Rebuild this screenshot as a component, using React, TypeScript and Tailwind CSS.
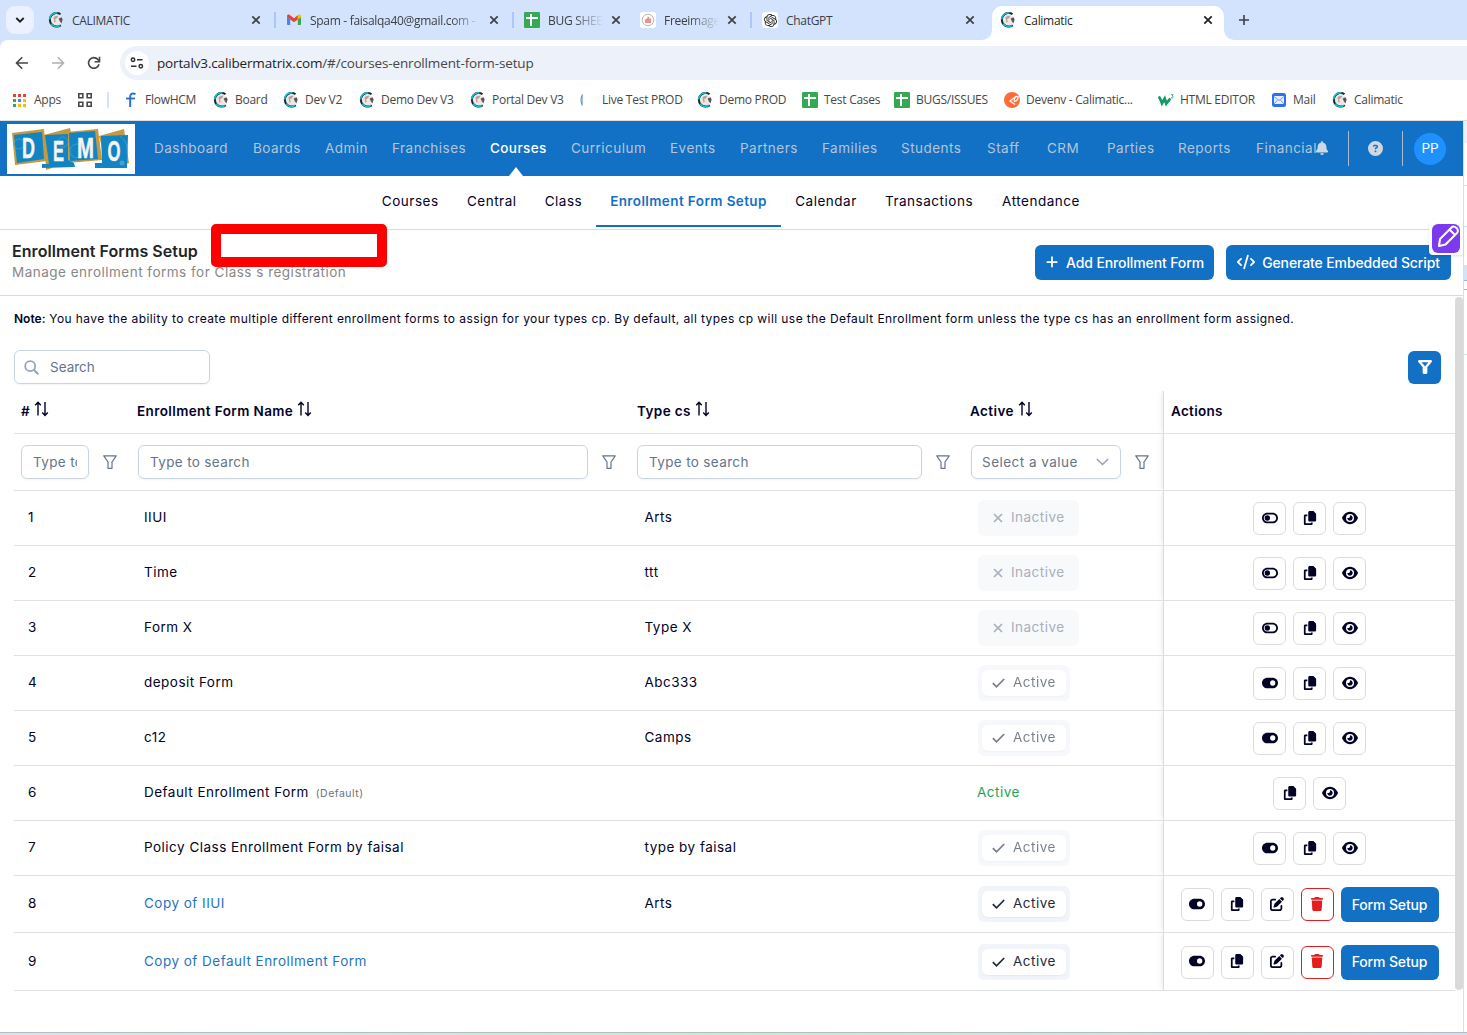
import type { ReactNode } from "react";
import clsx from "clsx";
import {
  FaBell,
  FaCircleQuestion,
  FaCode,
  FaCopy,
  FaEye,
  FaPenToSquare,
  FaPlus,
  FaToggleOff,
  FaToggleOn,
  FaTrash,
} from "react-icons/fa6";
import { SiOpenai } from "react-icons/si";

function GlobeIcon() {
  return (
    <svg width="16" height="16" viewBox="0 0 16 16" fill="none" className="shrink-0">
      <circle cx="8.2" cy="8" r="5.6" fill="#eee6e4" />
      <path d="M5.500 5.500C6.500 4 8.500 3.300 10.300 3.800L9.200 6 7 7.400l.8 2.200L6.500 11z" fill="#b3a29e" />
      <path d="M10.600 6.600l3-1.400 1 2.200-1.200 4-1.700-2.300z" fill="#5b5558" />
      <path d="M12.500 2.200A6.800 6.800 0 1 0 12.800 13.200" stroke="#17252c" strokeWidth="2" />
      <path d="M9.500 1A6.600 6.600 0 0 0 1.600 7.500M3 11.800A6.300 6.300 0 0 0 12 13.400" stroke="#14bccb" strokeWidth="1.700" />
    </svg>
  );
}

function GmailIcon() {
  return (
    <svg width="16" height="16" viewBox="0 0 16 16" className="shrink-0">
      <path d="M1 5v7.2c0 .5.4.8.8.8h2.4V7.2z" fill="#4285f4" />
      <path d="M15 5v7.2c0 .5-.4.8-.8.8h-2.4V7.2z" fill="#34a853" />
      <path d="M11.8 3.6v3.8L15 5V4c0-1.3-1.5-2-2.5-1.2z" fill="#fbbc04" />
      <path d="M1 5V4c0-1.3 1.500-2 2.500-1.200L8 6.200l3.800-2.900v4.100L8 10.200 4.200 7.400z" fill="#ea4335" />
    </svg>
  );
}

function SheetIcon() {
  return (
    <svg width="16" height="16" viewBox="0 0 16 16" className="shrink-0">
      <rect width="16" height="16" rx="1.2" fill="#34a853" />
      <path d="M2 6h12M7 2v12" stroke="#fff" strokeWidth="2" />
    </svg>
  );
}

function FreeimageIcon() {
  return (
    <svg width="16" height="16" viewBox="0 0 16 16" className="shrink-0">
      <rect width="16" height="16" rx="2.500" fill="#fff" />
      <circle cx="8" cy="8" r="5.800" fill="#fff" stroke="#b9b9bd" />
      <path d="M5 11V7.500L7.500 6V4.800h1.600V6.500H11V11z" fill="#ef8f86" />
    </svg>
  );
}

function ChatGptIcon() {
  return (
    <span className="flex size-4 shrink-0 items-center justify-center rounded-[3px] bg-white text-[#202123]">
      <SiOpenai size={13} />
    </span>
  );
}

function FlowIcon() {
  return (
    <svg width="16" height="16" viewBox="0 0 16 16" fill="none" className="shrink-0">
      <path d="M12.500 2.200C9 .6 7.200 2 7.200 4.500V15" stroke="#2f6fc4" strokeWidth="2" />
      <path d="M3 6.500h9" stroke="#2f6fc4" strokeWidth="1.800" />
    </svg>
  );
}

function ThinIcon() {
  return (
    <svg width="16" height="16" viewBox="0 0 16 16" fill="none" className="shrink-0">
      <path d="M2.600 2.500C.6 5.500.6 10.500 2.400 13.500" stroke="#4c9bc4" strokeWidth="1.200" />
      <path d="M2.600 4v8" stroke="#a9b7c0" strokeWidth="1" />
    </svg>
  );
}

function PostmanIcon() {
  return (
    <svg width="16" height="16" viewBox="0 0 16 16" fill="none" className="shrink-0">
      <circle cx="8" cy="8" r="8" fill="#ff6c37" />
      <path d="M12.500 4L6 9l5 3.500M14 4.500c-3 0-4.500 2.500-3.500 5 2.500-.5 3.800-2.500 3.500-5z" stroke="#fff" strokeWidth="1.200" />
    </svg>
  );
}

function HtmlEditorIcon() {
  return (
    <svg width="16" height="16" viewBox="0 0 16 16" fill="none" className="shrink-0">
      <path d="M.8 4.500c1.500 2 2.200 4 3.200 6.700l2.700-4.500 1.600 4.800 4-5" stroke="#0f9d67" strokeWidth="2.800" />
      <path d="M13 2.700h2.200l-1 1.300c1.600.2 1.200 1.900-.2 1.900h-1" stroke="#0f9d67" strokeWidth=".8" />
    </svg>
  );
}

function MailIcon() {
  return (
    <svg width="16" height="16" viewBox="0 0 16 16" fill="none" className="shrink-0">
      <rect x="1" y="1" width="14" height="14" rx="2.500" fill="#2f6fed" />
      <rect x="3" y="4" width="10" height="8" fill="#e8f0ff" />
      <path d="M3 4.500l5 4 5-4M3 12l3.500-4M13 12L9.500 8" stroke="#6d9af5" />
    </svg>
  );
}

function CloseIcon() {
  return (
    <svg width="10" height="10" viewBox="0 0 10 10" className="shrink-0">
      <path d="M1.300 1.300l7.400 7.400M8.700 1.300L1.300 8.700" stroke="currentColor" strokeWidth="1.700" />
    </svg>
  );
}

type Tab = { title: string; icon: ReactNode; box: string; line?: boolean; active?: boolean; fade?: boolean };

const tabs: Tab[] = [
  { title: "CALIMATIC", icon: <GlobeIcon />, box: "w-[236px] pl-2 pr-[15px]", line: true },
  { title: "Spam - faisalqa40@gmail.com -", icon: <GmailIcon />, box: "w-[238px] pl-[10px] pr-[15px]", line: true, fade: true },
  { title: "BUG SHEE", icon: <SheetIcon />, box: "w-[122px] pl-[10px] pr-[15px]", fade: true },
  { title: "Freeimage", icon: <FreeimageIcon />, box: "w-[116px] pl-1 pr-[15px]", line: true, fade: true },
  { title: "ChatGPT", icon: <ChatGptIcon />, box: "w-[240px] pl-[10px] pr-[17px]" },
  { title: "Calimatic", icon: <GlobeIcon />, box: "w-[232px] pl-2 pr-[11px]", active: true },
];

function TabStrip() {
  return (
    <div className="flex h-10 items-end bg-[#d3e3fd] pl-1.5 text-[12px] text-[#3c4043]">
      <div className="mb-1.5 flex size-7 items-center justify-center rounded-[9px] bg-[#ebf1fe]">
        <svg width="10" height="8" viewBox="0 0 10 8" fill="none">
          <path d="M1.300 2l3.700 3.600L8.700 2" stroke="#1f1f1f" strokeWidth="1.900" />
        </svg>
      </div>
      <div className="ml-1.5 flex">
        {tabs.map((tab) => (
          <div
            key={tab.title}
            className={clsx(
              "relative flex h-[34px] items-center pb-1.5",
              tab.box,
              tab.active && "rounded-t-[10px] bg-white text-[#1f1f1f]",
            )}
          >
            {tab.icon}
            <span
              className={clsx(
                "mt-px ml-2 min-w-0 flex-1 tracking-[-0.3px] whitespace-nowrap",
                tab.fade && "mr-2 [mask-image:linear-gradient(to_right,black_calc(100%-30px),transparent)]",
              )}
            >
              {tab.title}
            </span>
            <CloseIcon />
            {tab.line && <span className="absolute top-1.5 right-0 h-4 w-0.5 bg-[#a8c7fa]" />}
            {tab.active && (
              <>
                <svg className="absolute bottom-0 -left-[10px]" width="10" height="10">
                  <path d="M10 0v10H0A10 10 0 0 0 10 0z" fill="#fff" />
                </svg>
                <svg className="absolute -right-[10px] bottom-0" width="10" height="10">
                  <path d="M0 0v10h10A10 10 0 0 1 0 0z" fill="#fff" />
                </svg>
              </>
            )}
          </div>
        ))}
      </div>
      <svg className="mb-[15px] ml-[15px]" width="10" height="10" viewBox="0 0 10 10">
        <path d="M5 0v10M0 5h10" stroke="#3c4043" strokeWidth="1.600" />
      </svg>
    </div>
  );
}

function AddressBar() {
  return (
    <div className="flex h-10 items-center rounded-tl-[8px] bg-white pt-1.5">
      <svg width="14" height="14" viewBox="0 0 14 14" fill="none" className="ml-[15px]">
        <path d="M13 7H2M7.200 1.300L1.500 7l5.700 5.700" stroke="#474747" strokeWidth="1.600" />
      </svg>
      <svg width="14" height="14" viewBox="0 0 14 14" fill="none" className="ml-[22px]">
        <path d="M1 7h11M6.800 1.300L12.500 7l-5.700 5.700" stroke="#b0b0b0" strokeWidth="1.600" />
      </svg>
      <svg width="14" height="14" viewBox="0 0 14 14" fill="none" className="ml-[22px]">
        <path d="M12 8.200A5.300 5.300 0 1 1 10.800 3.400L12.300 5" stroke="#474747" strokeWidth="1.600" />
        <path d="M12.500.8v5H7.600" stroke="#474747" strokeWidth="1.600" />
      </svg>
      <div className="ml-[19px] flex h-[34px] flex-1 items-center rounded-l-full bg-[#ecf1fa] pl-[5px]">
        <span className="flex size-6 items-center justify-center rounded-full bg-white">
          <svg width="14" height="12" viewBox="0 0 14 12" fill="none" stroke="#303030" strokeWidth="1.500">
            <circle cx="3" cy="2.700" r="1.700" />
            <circle cx="10.800" cy="9.300" r="1.700" />
            <path d="M7 2.700h5.500M1 9.300h5.500" />
          </svg>
        </span>
        <span className="ml-2 text-[13.5px] tracking-[-0.15px] text-[#474747]">
          <span className="text-[#1f1f1f]">portalv3.calibermatrix.com</span>/#/courses-enrollment-form-setup
        </span>
      </div>
    </div>
  );
}

const bookmarks: { label: string; icon: ReactNode; width: string }[] = [
  { label: "FlowHCM", icon: <FlowIcon />, width: "w-[90px]" },
  { label: "Board", icon: <GlobeIcon />, width: "w-[70px]" },
  { label: "Dev V2", icon: <GlobeIcon />, width: "w-[76px]" },
  { label: "Demo Dev V3", icon: <GlobeIcon />, width: "w-[111px]" },
  { label: "Portal Dev V3", icon: <GlobeIcon />, width: "w-[110px]" },
  { label: "Live Test PROD", icon: <ThinIcon />, width: "w-[117px]" },
  { label: "Demo PROD", icon: <GlobeIcon />, width: "w-[105px]" },
  { label: "Test Cases", icon: <SheetIcon />, width: "w-[92px]" },
  { label: "BUGS/ISSUES", icon: <SheetIcon />, width: "w-[110px]" },
  { label: "Devenv - Calimatic...", icon: <PostmanIcon />, width: "w-[154px]" },
  { label: "HTML EDITOR", icon: <HtmlEditorIcon />, width: "w-[113px]" },
  { label: "Mail", icon: <MailIcon />, width: "w-[61px]" },
  { label: "Calimatic", icon: <GlobeIcon />, width: "w-[90px]" },
];

const appDots = [
  "fill-[#ea4335]", "fill-[#ea4335]", "fill-[#ea4335]",
  "fill-[#34a853]", "fill-[#4285f4]", "fill-[#fbbc04]",
  "fill-[#34a853]", "fill-[#fbbc04]", "fill-[#fbbc04]",
];

function BookmarksBar() {
  return (
    <div className="flex h-[41px] items-center border-b border-[#dcdfdf] bg-white pl-[13px] text-[12px] tracking-[-0.26px] text-[#474747]">
      <svg width="13" height="13" viewBox="0 0 13 13">
        {appDots.map((fill, i) => (
          <rect key={i} x={(i % 3) * 5} y={Math.floor(i / 3) * 5} width="3" height="3" className={fill} />
        ))}
      </svg>
      <span className="ml-2 w-11">Apps</span>
      <svg width="14" height="14" viewBox="0 0 14 14" fill="none" stroke="#474747" strokeWidth="1.600">
        <path d="M.8.8h4v4h-4zM9.200.8h4v4h-4zM.8 9.200h4v4h-4zM9.200 9.200h4v4h-4z" />
      </svg>
      <span className="mr-[14px] ml-[15px] h-4 w-0.5 bg-[#d3e3fd]" />
      {bookmarks.map((item) => (
        <div key={item.label} className={clsx("flex shrink-0 items-center gap-1.5 whitespace-nowrap", item.width)}>
          {item.icon}
          {item.label}
        </div>
      ))}
    </div>
  );
}

function DemoLogo() {
  return (
    <svg width="128" height="50" viewBox="0 0 128 50" className="shrink-0 bg-white">
      <g fill="#c29a3f">
        <path d="M5 9l32-4 3 32-32 4z" />
        <path d="M37 11l26-7 2 10-20 30-6 2z" />
        <path d="M59 8l32-3 4 31-34 3z" />
        <path d="M92 12l25-7 5 34-22 5z" />
      </g>
      <g fill="#1283c3">
        <path d="M7 11l28-3 2 27-27 4z" />
        <path d="M38 11l23-1v26l6 3 1 4-33 1V40h7z" />
        <path d="M62 9l26-2 3 28-28 2z" />
        <path d="M94 12l27-1-1 33H88V39h7z" />
      </g>
      <g fill="none" stroke="#3fa3d6" strokeWidth=".8">
        <circle cx="12" cy="20" r="5" />
        <circle cx="56" cy="18" r="5" />
        <circle cx="70" cy="27" r="7" />
        <path d="M113 12c6 4 8 12 7 18" />
      </g>
      <circle cx="115" cy="39" r="2.500" fill="#3fa3d6" />
      <g fill="#f4f4f2" stroke="#f4f4f2" strokeWidth=".5" fontFamily="'Liberation Sans', sans-serif" fontWeight="700" fontSize="29">
        <text x="15" y="34" textLength="13" lengthAdjust="spacingAndGlyphs">D</text>
        <text x="46" y="36.500" textLength="11" lengthAdjust="spacingAndGlyphs">E</text>
        <text x="70" y="33.500" textLength="17" lengthAdjust="spacingAndGlyphs">M</text>
        <text x="100.500" y="37" textLength="13" lengthAdjust="spacingAndGlyphs">O</text>
      </g>
    </svg>
  );
}

const navItems = [
  { label: "Dashboard", width: "w-[99px]" },
  { label: "Boards", width: "w-[72px]" },
  { label: "Admin", width: "w-[67px]" },
  { label: "Franchises", width: "w-[98px]" },
  { label: "Courses", width: "w-[81px]", active: true },
  { label: "Curriculum", width: "w-[99px]" },
  { label: "Events", width: "w-[70px]" },
  { label: "Partners", width: "w-[82px]" },
  { label: "Families", width: "w-[79px]" },
  { label: "Students", width: "w-[86px]" },
  { label: "Staff", width: "w-[60px]" },
  { label: "CRM", width: "w-[60px]" },
  { label: "Parties", width: "w-[71px]" },
  { label: "Reports", width: "w-[78px]" },
  { label: "Financial", width: "w-[59px]" },
];

function NavBar() {
  return (
    <header className="flex h-[55px] items-center bg-[#1270c5] pl-[7px]">
      <DemoLogo />
      <nav className="ml-[19px] flex h-full text-[13.5px] tracking-[0.48px] text-[#b3c6d9]">
        {navItems.map((item) => (
          <a
            key={item.label}
            className={clsx(
              "relative flex shrink-0 items-center whitespace-nowrap",
              item.width,
              item.active && "font-medium tracking-[0.4px] text-white",
            )}
          >
            {item.label}
            {item.active && (
              <svg className="absolute bottom-0 left-[19px]" width="14" height="9">
                <path d="M0 9l7-9 7 9z" fill="#fff" />
              </svg>
            )}
          </a>
        ))}
      </nav>
      <FaBell size={14} className="-mt-0.5 text-[#cdd8e4]" />
      <span className="ml-[19px] h-[35px] w-px bg-[#a9bccf]" />
      <FaCircleQuestion size={15} className="-mt-px ml-[19px] text-[#cdd8e4]" />
      <span className="ml-[19px] h-[35px] w-px bg-[#a9bccf]" />
      <span className="ml-[11px] flex size-8 items-center justify-center rounded-full bg-[#1e90ff] text-[13.5px] text-white">
        PP
      </span>
    </header>
  );
}

const subItems = [
  { label: "Courses", width: "w-[84.5px]" },
  { label: "Central", width: "w-[78.5px]" },
  { label: "Class", width: "w-[65px]" },
  { label: "Enrollment Form Setup", width: "w-[185px]", active: true },
  { label: "Calendar", width: "w-[90px]" },
  { label: "Transactions", width: "w-[116px]" },
  { label: "Attendance", width: "w-[108px]" },
];

function SubNav() {
  return (
    <nav className="flex h-[54px] border-b border-[#dcdcdc] pb-0.5 pl-[368px] text-[13.5px] tracking-[0.52px]">
      {subItems.map((item) => (
        <a
          key={item.label}
          className={clsx(
            "flex shrink-0 items-center justify-center border-b-2 pt-0.5 whitespace-nowrap",
            item.width,
            item.active ? "border-[#1270c5] font-semibold tracking-[0.4px] text-[#1270c5]" : "border-transparent",
          )}
        >
          {item.label}
        </a>
      ))}
    </nav>
  );
}

function PageTitle() {
  return (
    <div className="flex h-[66px] items-center justify-between border-b border-[#dcdcdc] pr-3 pl-3">
      <div className="-mt-[3px]">
        <h1 className="text-[16px] leading-[22px] font-semibold tracking-[0.06px] text-[#212529]">Enrollment Forms Setup</h1>
        <p className="text-[13.5px] leading-5 tracking-[0.49px] text-[#888]">Manage enrollment forms for Class s registration</p>
      </div>
      <div className="flex gap-3 text-[14px] font-medium tracking-[-0.12px] text-white">
        <button className="flex h-[35px] w-[179px] items-center justify-center gap-[7px] rounded-md bg-[#1270c5] pb-px">
          <FaPlus size={14} />
          Add Enrollment Form
        </button>
        <button className="flex h-[35px] w-[225px] items-center justify-center gap-[7px] rounded-md bg-[#1270c5] pb-px">
          <FaCode size={18} />
          Generate Embedded Script
        </button>
      </div>
    </div>
  );
}

function FunnelIcon({ bold = false }: { bold?: boolean }) {
  return (
    <svg width="14" height="14" viewBox="0 0 14 14" fill="none" className="shrink-0">
      {bold ? (
        <path d="M1.200 1.200h11.600L8.200 6.800v6H5.800v-6z" stroke="currentColor" strokeWidth="2.300" strokeLinejoin="round" />
      ) : (
        <path d="M.8.800h12.400L9 7v6.300H5V7z" stroke="currentColor" strokeWidth="1.200" strokeLinejoin="round" />
      )}
    </svg>
  );
}

function SortIcon() {
  return (
    <svg width="15" height="16" viewBox="0 0 15 16" fill="none" className="mb-1">
      <path
        d="M4 14.500V1.500M1.200 4.200L4 1.300l2.800 2.900M11 1v13M8.200 11.600l2.800 2.900 2.800-2.900"
        stroke="currentColor"
        strokeWidth="1.400"
      />
    </svg>
  );
}

function HeadCell({ label }: { label: string }) {
  return (
    <div className="flex items-center gap-1 pb-0.5 pl-[7px] font-semibold tracking-[0.4px]">
      {label}
      <SortIcon />
    </div>
  );
}

function FilterField({ width, inset = "pl-[7px]" }: { width: string; inset?: string }) {
  return (
    <div className={clsx("flex items-center gap-[14px] text-[#64748b]", inset)}>
      <div className={clsx("h-[34px] rounded-md border border-[#cbd5e1] px-[11px] leading-8 tracking-[0.35px] shadow-xs", width)}>
        <div className="overflow-hidden whitespace-nowrap">Type to search</div>
      </div>
      <FunnelIcon />
    </div>
  );
}

function StatusPill({ status }: { status: string }) {
  if (status === "default") {
    return <span className="-mt-0.5 -ml-px text-[#22a552]">Active</span>;
  }
  if (status === "inactive") {
    return (
      <span className="flex h-9 w-[101px] items-center gap-2 rounded-md bg-[#f7f9fb] pl-[15px] text-[#a8b0bd]">
        <svg width="10" height="10" viewBox="0 0 10 10">
          <path d="M1 1l8 8M9 1L1 9" stroke="currentColor" strokeWidth="1.700" />
        </svg>
        <span className="-mt-0.5">Inactive</span>
      </span>
    );
  }
  return (
    <span
      className={clsx(
        "flex h-9 w-[91.500px] items-center rounded-md bg-[#f1f5f9] px-1 text-[#1e293b]",
        status === "locked" && "opacity-60",
      )}
    >
      <span className="flex h-[26px] w-full items-center gap-2 rounded-md bg-white pl-[10px] shadow-xs">
        <svg width="13" height="10" viewBox="0 0 13 10" fill="none">
          <path d="M.8 5.200l3.700 3.600L12.200 1" stroke="currentColor" strokeWidth="1.700" />
        </svg>
        <span className="-mt-px tracking-[0.48px]">Active</span>
      </span>
    </span>
  );
}

function IconButton({ danger = false, children }: { danger?: boolean; children: ReactNode }) {
  return (
    <button
      className={clsx(
        "flex size-[33px] items-center justify-center rounded-md border bg-white pb-0.5",
        danger ? "border-[#e41e1e] text-[#e41e1e]" : "border-[#dcdcde] text-[#020227]",
      )}
    >
      {children}
    </button>
  );
}

type Row = { id: number; name: string; type: string; status: string; height: string };

const rows: Row[] = [
  { id: 1, name: "IIUI", type: "Arts", status: "inactive", height: "h-[55px]" },
  { id: 2, name: "Time", type: "ttt", status: "inactive", height: "h-[55px]" },
  { id: 3, name: "Form X", type: "Type X", status: "inactive", height: "h-[55px]" },
  { id: 4, name: "deposit Form", type: "Abc333", status: "locked", height: "h-[55px]" },
  { id: 5, name: "c12", type: "Camps", status: "locked", height: "h-[55px]" },
  { id: 6, name: "Default Enrollment Form", type: "", status: "default", height: "h-[55px]" },
  { id: 7, name: "Policy Class Enrollment Form by faisal", type: "type by faisal", status: "locked", height: "h-[55px]" },
  { id: 8, name: "Copy of IIUI", type: "Arts", status: "active", height: "h-[57px]" },
  { id: 9, name: "Copy of Default Enrollment Form", type: "", status: "active", height: "h-[58px]" },
];

function RowActions({ status }: { status: string }) {
  const editable = status === "active";
  return (
    <div className="flex items-center gap-[7px]">
      {status !== "default" && (
        <IconButton>{status === "inactive" ? <FaToggleOff size={16} /> : <FaToggleOn size={16} />}</IconButton>
      )}
      <IconButton>
        <FaCopy size={14} />
      </IconButton>
      {editable ? (
        <>
          <IconButton>
            <FaPenToSquare size={14} />
          </IconButton>
          <IconButton danger>
            <FaTrash size={14} />
          </IconButton>
          <button className="h-[35px] w-[98px] rounded-md bg-[#1270c5] pb-px text-[14px] font-medium tracking-[-0.15px] text-white">
            Form Setup
          </button>
        </>
      ) : (
        <IconButton>
          <FaEye size={16} />
        </IconButton>
      )}
    </div>
  );
}

const grid = "grid grid-cols-[116px_500px_333px_200px_292px] border-b border-[#dfe1e3]";
const actionCell = "border-l border-[#dcdcdc] bg-white shadow-[0_0_6px_rgba(0,0,0,0.12)] [clip-path:inset(0_0_0_-6px)]";

function FormsTable() {
  return (
    <div className="text-[13.5px] tracking-[0.48px]">
      <div className={clsx(grid, "h-[43px]")}>
        <HeadCell label="#" />
        <HeadCell label="Enrollment Form Name" />
        <HeadCell label="Type cs" />
        <HeadCell label="Active" />
        <div className={clsx(actionCell, "flex items-center pb-0.5 pl-[7px] font-semibold tracking-[0.3px]")}>Actions</div>
      </div>
      <div className={clsx(grid, "h-[57px]")}>
        <FilterField width="w-[68px]" />
        <FilterField width="w-[450px]" inset="pl-2" />
        <FilterField width="w-[285px]" />
        <div className="flex items-center gap-[14px] pl-2 text-[#64748b]">
          <div className="flex h-[34px] w-[150px] items-center justify-between rounded-md border border-[#cbd5e1] pr-[11px] pl-[10px] shadow-xs">
            Select a value
            <svg width="13" height="8" viewBox="0 0 13 8" fill="none">
              <path d="M.8 1l5.700 5.600L12.200 1" stroke="#94a3b8" strokeWidth="1.400" />
            </svg>
          </div>
          <FunnelIcon />
        </div>
        <div className={actionCell} />
      </div>
      {rows.map((row) => (
        <div key={row.id} className={clsx(grid, row.height)}>
          <div className="flex items-center pb-px pl-[14px]">{row.id}</div>
          <div className={clsx("flex items-center pb-px pl-[14px]", row.status === "active" && "text-[#1f74bf]")}>
            {row.name}
            {row.status === "default" && <span className="mt-0.5 ml-[7px] text-[10.5px] text-[#6b7280]">(Default)</span>}
          </div>
          <div className="flex items-center pb-px pl-[14.500px]">{row.type}</div>
          <div className="flex items-center pl-[15px]">
            <StatusPill status={row.status} />
          </div>
          <div className={clsx(actionCell, "flex items-center justify-center pt-px")}>
            <RowActions status={row.status} />
          </div>
        </div>
      ))}
    </div>
  );
}

function Content() {
  return (
    <div className="flex h-[736px]">
      <main className="w-[1455px] pl-[14px]">
        <p className="pt-[14px] text-[12px] leading-[18px] tracking-[0.42px] whitespace-nowrap">
          <b className="font-semibold tracking-[0]">Note:</b> You have the ability to create multiple different enrollment forms to
          assign for your types cp. By default, all types cp will use the Default Enrollment form unless the type cs has an
          enrollment form assigned.
        </p>
        <div className="mt-[22px] flex h-[41px] items-start justify-between pr-[14px]">
          <div className="flex h-[34px] w-[196px] items-center gap-[11px] rounded-md border border-[#cbd5e1] pl-[9px] text-[13.5px] text-[#64748b] shadow-xs">
            <svg width="15" height="15" viewBox="0 0 15 15" fill="none">
              <circle cx="6.200" cy="6.200" r="5" stroke="#94a3b8" strokeWidth="1.800" />
              <path d="M10 10l4.300 4.300" stroke="#94a3b8" strokeWidth="2" />
            </svg>
            Search
          </div>
          <button className="mt-px flex size-[33px] items-center justify-center rounded-md bg-[#1270c5] pb-px text-white">
            <FunnelIcon bold />
          </button>
        </div>
        <FormsTable />
      </main>
      <div className="mt-px h-[693px] w-2 rounded-full bg-[#dadada]" />
    </div>
  );
}

export default function App() {
  return (
    <div className="relative h-[1035px] w-[1467px] overflow-hidden bg-white font-['Open_Sans',sans-serif]">
      <TabStrip />
      <div className="bg-[#d3e3fd]">
        <AddressBar />
      </div>
      <BookmarksBar />
      <div className="flex">
        <div className="w-[1463px] shrink-0 font-['Inter',sans-serif] text-[#020227]">
          <NavBar />
          <SubNav />
          <PageTitle />
          <Content />
        </div>
        <div className="flex-1 border-l border-[#cfe0fb]">
          <div className="h-[22px] bg-[#edf2fc]" />
          <div className="mt-[42px] h-px bg-[#cfe0fb]" />
          <div className="mt-[40px] h-px bg-[#cfe0fb]" />
          <div className="mt-[38px] h-[15px] bg-[#d3e3fd]" />
          <div className="h-[10px] border-y border-[#8ab4f8]" />
          <div className="mt-[64px] h-px bg-[#cfe0fb]" />
        </div>
      </div>
      <div className="h-px bg-[#b5bcc4]" />
      <div className="h-0.5 bg-linear-to-r from-[#d5e4ec] via-[#c6ecd2] to-[#d5dfec]" />

      <div className="absolute top-[223.5px] left-[210.5px] h-[43px] w-[176px] rounded-[5px] border-[10px] border-[#fe0000]" />
      <div className="absolute top-[221px] left-[1429px] flex h-[34px] w-[34px] items-center justify-center rounded-l bg-white shadow-sm">
        <svg width="28" height="29" viewBox="0 0 28 29" fill="none">
          <rect width="28" height="29" rx="6" fill="#7c3aed" />
          <path
            d="M7 22l1-7L19.500 3.500c1.500-1.500 3.500-1 5 .5s2 3.500.5 5L13.500 20.500zM17.500 5.500l5.500 5.500"
            stroke="#fff"
            strokeWidth="2"
            strokeLinejoin="round"
          />
        </svg>
      </div>
    </div>
  );
}
